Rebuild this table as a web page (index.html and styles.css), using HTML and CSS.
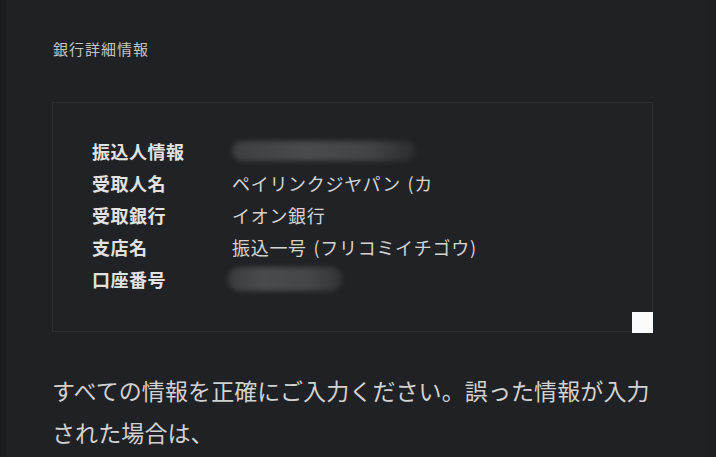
FILE: index.html
```html
<!DOCTYPE html>
<html lang="ja">
<head>
<meta charset="utf-8">
<link rel="stylesheet" href="styles.css">
</head>
<body>
<div class="page">
  <div class="edge-left"></div>
  <main class="content">
    <h1 class="title">銀行詳細情報</h1>
    <section class="card">
      <div class="rows">
        <div class="label">振込人情報</div>
        <div class="value"><span class="masked masked-a"></span></div>
        <div class="label">受取人名</div>
        <div class="value">ペイリンクジヤパン (カ</div>
        <div class="label">受取銀行</div>
        <div class="value">イオン銀行</div>
        <div class="label">支店名</div>
        <div class="value">振込一号 (フリコミイチゴウ)</div>
        <div class="label">口座番号</div>
        <div class="value"><span class="masked masked-b"></span></div>
      </div>
      <span class="corner"></span>
    </section>
    <p class="notice">すべての情報を正確にご入力ください。誤った情報が入力された場合は、</p>
  </main>
  <div class="edge-right"></div>
</div>
</body>
</html>
```

FILE: styles.css
```css
html, body {
  margin: 0;
  padding: 0;
  background: #202124;
}
body {
  width: 716px;
  height: 457px;
  overflow: hidden;
  font-family: "Noto Sans CJK JP", "Noto Sans", sans-serif;
  color: #d6d6d6;
}
.page {
  display: flex;
  height: 457px;
}
.edge-left {
  width: 6px;
  background: #1c1d20;
  flex: none;
}
.edge-right {
  width: 6px;
  background: #1d1e21;
  flex: none;
}
.content {
  flex: 1;
  padding-left: 46px;
  padding-right: 46px;
}
.title {
  margin: 37px 0 0 1px;
  font-size: 15px;
  line-height: 24px;
  font-weight: normal;
  color: #c4c4c4;
  letter-spacing: 1px;
}
.card {
  position: relative;
  width: 601px;
  margin-top: 41px;
  border: 1px solid #2d2e31;
  background: #212225;
  padding: 32px 0 35px 39px;
  box-sizing: border-box;
  height: 230px;
}
.rows {
  display: grid;
  grid-template-columns: 140px 1fr;
  grid-auto-rows: 32px;
  align-items: center;
}
.label {
  font-size: 18px;
  font-weight: bold;
  color: #e2e2e2;
  letter-spacing: 0.5px;
}
.value {
  font-size: 18px;
  color: #d4d4d4;
  letter-spacing: 0.7px;
  word-spacing: 2px;
  display: flex;
  align-items: center;
}
.masked {
  display: block;
  height: 20px;
  border-radius: 10px;
  background: linear-gradient(90deg, #3e3f42 0%, #4a4b4e 40%, #434447 75%, #2a2b2e 100%);
  filter: blur(2.5px);
}
.masked-a {
  width: 184px;
}
.masked-b {
  width: 114px;
  height: 24px;
  margin-left: -4px;
  border-radius: 12px;
  background: linear-gradient(90deg, #3a3b3e 0%, #4a4b4e 30%, #454649 70%, #333437 100%);
}
.corner {
  position: absolute;
  right: -1px;
  bottom: -2px;
  width: 21px;
  height: 21px;
  background: #fbfbfb;
}
.notice {
  margin: 37px 0 0 0;
  font-size: 23px;
  line-height: 42px;
  color: #d2d2d2;
  letter-spacing: 0.1px;
}
```
